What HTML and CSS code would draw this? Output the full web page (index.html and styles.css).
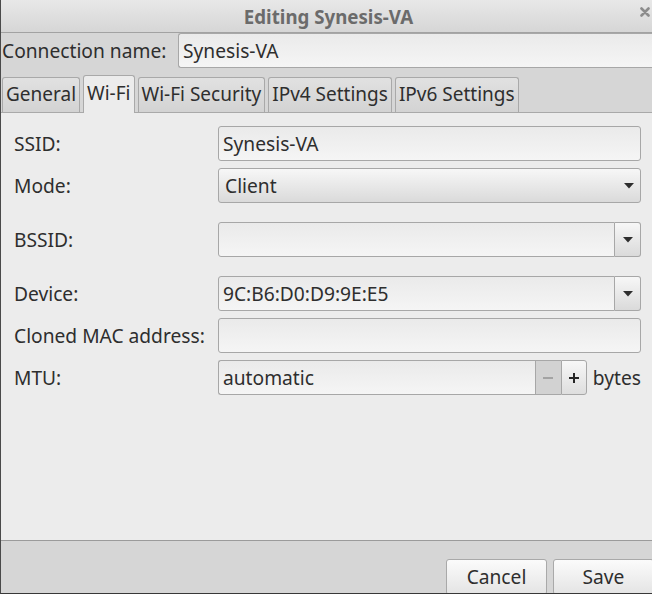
FILE: index.html
```html
<!DOCTYPE html>
<html>
<head>
<meta charset="utf-8">
<link rel="stylesheet" href="styles.css">
</head>
<body>
<div class="window">
  <div class="titlebar">
    <span class="title">Editing Synesis-VA</span>
    <svg class="close" width="10" height="10" viewBox="0 0 10 10"><path d="M1.5 1.5 L8.5 8.5 M8.5 1.5 L1.5 8.5" stroke="#8c8c8c" stroke-width="2.6" stroke-linecap="round"/></svg>
  </div>
  <div class="conn-row">
    <span class="conn-label">Connection name:</span>
    <div class="entry conn-entry">Synesis-VA</div>
  </div>
  <div class="tabs">
    <div class="tab">General</div>
    <div class="tab active">Wi-Fi</div>
    <div class="tab">Wi-Fi Security</div>
    <div class="tab">IPv4 Settings</div>
    <div class="tab">IPv6 Settings</div>
  </div>
  <div class="page">
    <div class="form">
      <div class="row">
        <span class="label">SSID:</span>
        <div class="field"><div class="entry full">Synesis-VA</div></div>
      </div>
      <div class="row">
        <span class="label">Mode:</span>
        <div class="field">
          <div class="combo">
            <span>Client</span>
            <svg class="arrow" width="10" height="6" viewBox="0 0 10 6"><polygon points="0,0 10,0 5,5.5" fill="#2e2e2e"/></svg>
          </div>
        </div>
      </div>
      <div class="row spaced">
        <span class="label">BSSID:</span>
        <div class="field combo-entry">
          <div class="entry ce-entry"></div>
          <div class="ce-btn"><svg class="arrow" width="10" height="6" viewBox="0 0 10 6"><polygon points="0,0 10,0 5,5.5" fill="#2e2e2e"/></svg></div>
        </div>
      </div>
      <div class="row spaced">
        <span class="label">Device:</span>
        <div class="field combo-entry">
          <div class="entry ce-entry">9C:B6:D0:D9:9E:E5</div>
          <div class="ce-btn"><svg class="arrow" width="10" height="6" viewBox="0 0 10 6"><polygon points="0,0 10,0 5,5.5" fill="#2e2e2e"/></svg></div>
        </div>
      </div>
      <div class="row">
        <span class="label">Cloned MAC address:</span>
        <div class="field"><div class="entry full"></div></div>
      </div>
      <div class="row">
        <span class="label">MTU:</span>
        <div class="field spin">
          <div class="entry spin-entry">automatic</div>
          <div class="spin-btn minus"><svg width="12" height="12" viewBox="0 0 12 12"><path d="M1 6 H11" stroke="#a3a3a3" stroke-width="2"/></svg></div>
          <div class="spin-btn plus"><svg width="12" height="12" viewBox="0 0 12 12"><path d="M1 6 H11 M6 1 V11" stroke="#262626" stroke-width="2"/></svg></div>
          <span class="unit">bytes</span>
        </div>
      </div>
    </div>
  </div>
  <div class="actions">
    <div class="btn">Cancel</div>
    <div class="btn">Save</div>
  </div>
</div>
</body>
</html>
```
FILE: styles.css
```css
html, body {
  margin: 0;
  padding: 0;
}
body {
  width: 652px;
  height: 594px;
  overflow: hidden;
  background: #d6d6d6;
  font-family: "Noto Sans", "Open Sans", sans-serif;
  font-size: 19.2px;
  color: #2e2e2e;
}
.window {
  width: 656px;
  height: 594px;
  box-sizing: border-box;
  border-left: 1px solid #4a4a4a;
  border-bottom: 1px solid #383838;
  background: #d6d6d6;
  display: flex;
  flex-direction: column;
  overflow: hidden;
}
.titlebar {
  flex: none;
  height: 32px;
  border-bottom: 1px solid #a2a2a2;
  background: linear-gradient(#e8e8e8, #d6d6d6);
  display: flex;
  align-items: center;
  justify-content: center;
  position: relative;
}
.title {
  font-weight: 700;
  font-size: 18.7px;
  color: #6b6b6b;
}
.close {
  position: absolute;
  left: 639px;
  top: 7px;
}
.conn-row {
  flex: none;
  height: 35px;
  display: flex;
  align-items: center;
}
.conn-label {
  width: 176px;
  padding-left: 1px;
}
.entry {
  box-sizing: border-box;
  height: 35px;
  border: 1px solid #a7a7a7;
  border-radius: 3px;
  background: linear-gradient(#eaeaea, #f5f5f5);
  padding-left: 4px;
  display: flex;
  align-items: center;
}
.conn-entry {
  flex: 1;
  border-right: none;
  border-radius: 3px 0 0 3px;
}
.tabs {
  flex: none;
  margin-top: 7px;
  height: 37px;
  display: flex;
  align-items: flex-end;
  gap: 3px;
  padding-left: 1px;
}
.tab {
  box-sizing: border-box;
  height: 35px;
  padding: 0 3px 2px;
  border: 1px solid #a9a9a9;
  border-bottom: none;
  border-radius: 3px 3px 0 0;
  background: linear-gradient(#e1e1e1, #d3d3d3);
  display: flex;
  align-items: center;
  font-size: 19px;
}
.tab.active {
  height: 38px;
  margin-bottom: -1px;
  background: #ececec;
  position: relative;
  z-index: 1;
  padding-bottom: 3px;
}
.page {
  flex: none;
  height: 429px;
  box-sizing: border-box;
  border-top: 1px solid #a9a9a9;
  border-bottom: 1px solid #9b9b9b;
  background: #ececec;
}
.form {
  padding: 13px 0 0 13px;
  display: flex;
  flex-direction: column;
  gap: 7px;
}
.row {
  height: 35px;
  display: flex;
  align-items: center;
}
.row.spaced {
  margin-top: 12px;
}
.label {
  width: 204px;
  flex: none;
}
.field {
  width: 423px;
  flex: none;
  display: flex;
}
.full {
  flex: 1;
}
.combo {
  flex: 1;
  box-sizing: border-box;
  height: 35px;
  border: 1px solid #a7a7a7;
  border-radius: 3px;
  background: linear-gradient(#f7f7f7, #dadada);
  display: flex;
  align-items: center;
  justify-content: space-between;
  padding: 0 6px 0 6px;
}
.arrow {
  display: block;
}
.ce-entry {
  flex: 1;
  border-radius: 3px 0 0 3px;
}
.ce-btn {
  box-sizing: border-box;
  width: 26px;
  height: 35px;
  border: 1px solid #a7a7a7;
  border-left: none;
  border-radius: 0 3px 3px 0;
  background: linear-gradient(#f7f7f7, #dadada);
  display: flex;
  align-items: center;
  justify-content: center;
  padding-left: 1px;
}
.spin {
  align-items: center;
}
.spin-entry {
  width: 317px;
  border-right: none;
  border-radius: 3px 0 0 3px;
}
.spin-btn {
  box-sizing: border-box;
  width: 26px;
  height: 35px;
  border: 1px solid #a7a7a7;
  display: flex;
  align-items: center;
  justify-content: center;
}
.spin-btn svg {
  display: block;
}
.minus {
  background: #d2d2d2;
  border-right: none;
}
.plus {
  background: linear-gradient(#f7f7f7, #dedede);
  border-radius: 0 3px 3px 0;
}
.unit {
  margin-left: 6px;
}
.actions {
  flex: 1;
  display: flex;
  gap: 6px;
  padding: 18px 0 0 445px;
  overflow: hidden;
}
.btn {
  flex: none;
  box-sizing: border-box;
  width: 101px;
  height: 36px;
  border: 1px solid #a9a9a9;
  border-radius: 3px;
  background: linear-gradient(#fbfbfb, #e4e4e4);
  display: flex;
  align-items: center;
  justify-content: center;
  padding-bottom: 1px;
}
```
